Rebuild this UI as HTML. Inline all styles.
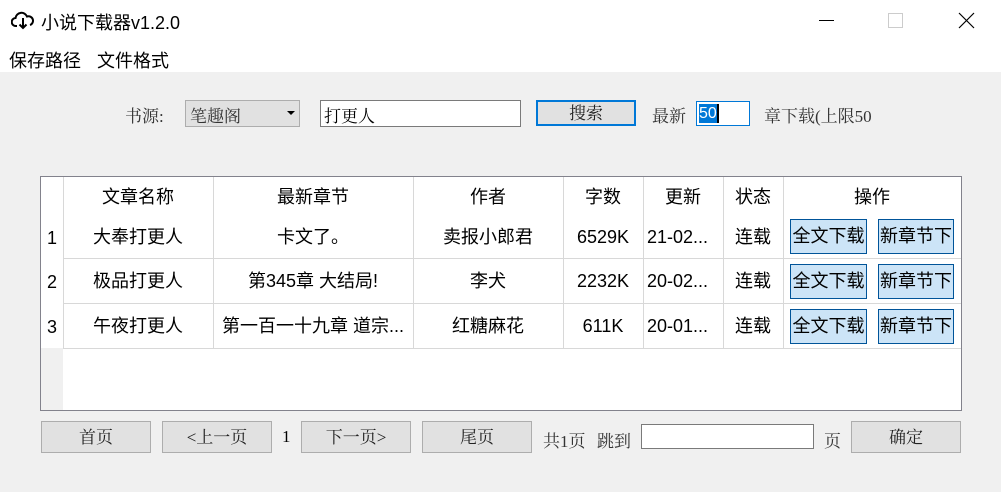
<!DOCTYPE html>
<html><head><meta charset="utf-8"><style>
*{margin:0;padding:0;box-sizing:border-box}
body{width:1001px;height:492px;background:#f0f0f0;position:relative;overflow:hidden;font-family:"Liberation Sans","Noto Sans CJK SC",sans-serif;color:#000}
.a{position:absolute;white-space:nowrap}
.s{font-family:"Liberation Serif","Noto Serif CJK SC",serif;font-size:17px;color:#333}
.btn{position:absolute;background:#e1e1e1;border:1px solid #adadad;font-family:"Liberation Serif","Noto Serif CJK SC",serif;font-size:17px;color:#222;text-align:center;line-height:31px}
.inp{position:absolute;background:#fff;border:1px solid #7a7a7a}
.cell{position:absolute;font-size:18px;text-align:center;line-height:20px}
.ob{position:absolute;background:#cce4f7;border:1px solid #005499;font-size:18px;line-height:33px;text-align:center;overflow:hidden;width:77px;height:35px}
</style></head><body>
<div class="a" style="left:0;top:0;width:1001px;height:72px;background:#fff"></div>
<svg class="a" style="left:11px;top:9px" width="24" height="22" viewBox="0 0 24 22"><path d="M6 17H5a4 4 0 0 1-0.5-8 6 6 0 0 1 11.5-1.5 4.5 4.5 0 0 1 3 8.5" fill="none" stroke="#000" stroke-width="2"/><path d="M12 9v10M8.5 15.5L12 19l3.5-3.5" fill="none" stroke="#000" stroke-width="2"/></svg>
<div class="a" style="left:41px;top:9px;font-size:18px">小说下载器v1.2.0</div>
<div class="a" style="left:819px;top:20px;width:15px;height:1px;background:#000"></div>
<div class="a" style="left:888px;top:13px;width:15px;height:15px;border:1px solid #ccc"></div>
<svg class="a" style="left:958px;top:12px" width="17" height="17"><path d="M1 1L16 16M16 1L1 16" stroke="#000" stroke-width="1.2"/></svg>
<div class="a" style="left:9px;top:47px;font-size:18px">保存路径</div>
<div class="a" style="left:97px;top:47px;font-size:18px">文件格式</div>

<div class="a s" style="left:125px;top:102px">书源:</div>
<div class="a" style="left:185px;top:100px;width:115px;height:27px;background:#e1e1e1;border:1px solid #adadad"></div>
<div class="a s" style="left:190px;top:102px">笔趣阁</div>
<div class="a" style="left:287px;top:111px;width:0;height:0;border-left:4px solid transparent;border-right:4px solid transparent;border-top:4px solid #000"></div>
<div class="inp" style="left:320px;top:100px;width:201px;height:27px"></div>
<div class="a s" style="left:324px;top:102px;color:#000">打更人</div>
<div class="btn" style="left:536px;top:100px;width:100px;height:26px;border:2px solid #0078d7;line-height:24px">搜索</div>
<div class="a s" style="left:652px;top:102px">最新</div>
<div class="inp" style="left:696px;top:101px;width:54px;height:25px;border-color:#0078d7"></div>
<div class="a" style="left:699px;top:104px;background:#0078d7;color:#fff;font-size:16px;line-height:19px;padding-right:1px">50</div>
<div class="a" style="left:717px;top:104px;width:2px;height:19px;background:#000"></div>
<div class="a s" style="left:764px;top:102px">章下载(上限50</div>

<div class="a" style="left:40px;top:176px;width:922px;height:235px;background:#fff;border:1px solid #82828c"></div>
<div class="a" style="left:41px;top:348px;width:22px;height:62px;background:#f0f0f0"></div>
<div class="a" style="left:63px;top:177px;width:1px;height:171px;background:#d8d8d8"></div>
<div class="a" style="left:213px;top:177px;width:1px;height:171px;background:#d8d8d8"></div>
<div class="a" style="left:413px;top:177px;width:1px;height:171px;background:#d8d8d8"></div>
<div class="a" style="left:563px;top:177px;width:1px;height:171px;background:#d8d8d8"></div>
<div class="a" style="left:643px;top:177px;width:1px;height:171px;background:#d8d8d8"></div>
<div class="a" style="left:723px;top:177px;width:1px;height:171px;background:#d8d8d8"></div>
<div class="a" style="left:783px;top:177px;width:1px;height:171px;background:#d8d8d8"></div>
<div class="a" style="left:63px;top:258px;width:898px;height:1px;background:#d8d8d8"></div>
<div class="a" style="left:63px;top:303px;width:898px;height:1px;background:#d8d8d8"></div>
<div class="a" style="left:63px;top:348px;width:898px;height:1px;background:#d8d8d8"></div>

<div class="cell" style="left:63px;top:187px;width:150px">文章名称</div>
<div class="cell" style="left:213px;top:187px;width:200px">最新章节</div>
<div class="cell" style="left:413px;top:187px;width:150px">作者</div>
<div class="cell" style="left:563px;top:187px;width:80px">字数</div>
<div class="cell" style="left:643px;top:187px;width:80px">更新</div>
<div class="cell" style="left:723px;top:187px;width:60px">状态</div>
<div class="cell" style="left:783px;top:187px;width:178px">操作</div>

<div class="cell" style="left:41px;top:228px;width:22px">1</div>
<div class="cell" style="left:63px;top:227px;width:150px">大奉打更人</div>
<div class="cell" style="left:213px;top:227px;width:200px">卡文了。</div>
<div class="cell" style="left:413px;top:227px;width:150px">卖报小郎君</div>
<div class="cell" style="left:563px;top:227px;width:80px">6529K</div>
<div class="cell" style="left:643px;top:227px;width:80px;text-align:left;padding-left:4px">21-02...</div>
<div class="cell" style="left:723px;top:227px;width:60px">连载</div>
<div class="ob" style="left:790px;top:219px">全文下载</div>
<div class="ob" style="left:878px;top:219px;width:76px">新章节下</div>

<div class="cell" style="left:41px;top:272px;width:22px">2</div>
<div class="cell" style="left:63px;top:271px;width:150px">极品打更人</div>
<div class="cell" style="left:213px;top:271px;width:200px">第345章 大结局!</div>
<div class="cell" style="left:413px;top:271px;width:150px">李犬</div>
<div class="cell" style="left:563px;top:271px;width:80px">2232K</div>
<div class="cell" style="left:643px;top:271px;width:80px;text-align:left;padding-left:4px">20-02...</div>
<div class="cell" style="left:723px;top:271px;width:60px">连载</div>
<div class="ob" style="left:790px;top:264px">全文下载</div>
<div class="ob" style="left:878px;top:264px;width:76px">新章节下</div>

<div class="cell" style="left:41px;top:317px;width:22px">3</div>
<div class="cell" style="left:63px;top:316px;width:150px">午夜打更人</div>
<div class="cell" style="left:213px;top:316px;width:200px">第一百一十九章 道宗...</div>
<div class="cell" style="left:413px;top:316px;width:150px">红糖麻花</div>
<div class="cell" style="left:563px;top:316px;width:80px">611K</div>
<div class="cell" style="left:643px;top:316px;width:80px;text-align:left;padding-left:4px">20-01...</div>
<div class="cell" style="left:723px;top:316px;width:60px">连载</div>
<div class="ob" style="left:790px;top:309px">全文下载</div>
<div class="ob" style="left:878px;top:309px;width:76px">新章节下</div>

<div class="btn" style="left:41px;top:421px;width:110px;height:32px">首页</div>
<div class="btn" style="left:162px;top:421px;width:110px;height:32px">&lt;上一页</div>
<div class="a s" style="left:282px;top:427px;color:#000">1</div>
<div class="btn" style="left:301px;top:421px;width:110px;height:32px">下一页&gt;</div>
<div class="btn" style="left:422px;top:421px;width:110px;height:32px">尾页</div>
<div class="a s" style="left:543px;top:427px">共1页</div>
<div class="a s" style="left:597px;top:427px">跳到</div>
<div class="inp" style="left:641px;top:424px;width:173px;height:25px"></div>
<div class="a s" style="left:824px;top:427px">页</div>
<div class="btn" style="left:851px;top:421px;width:110px;height:32px">确定</div>
</body></html>
